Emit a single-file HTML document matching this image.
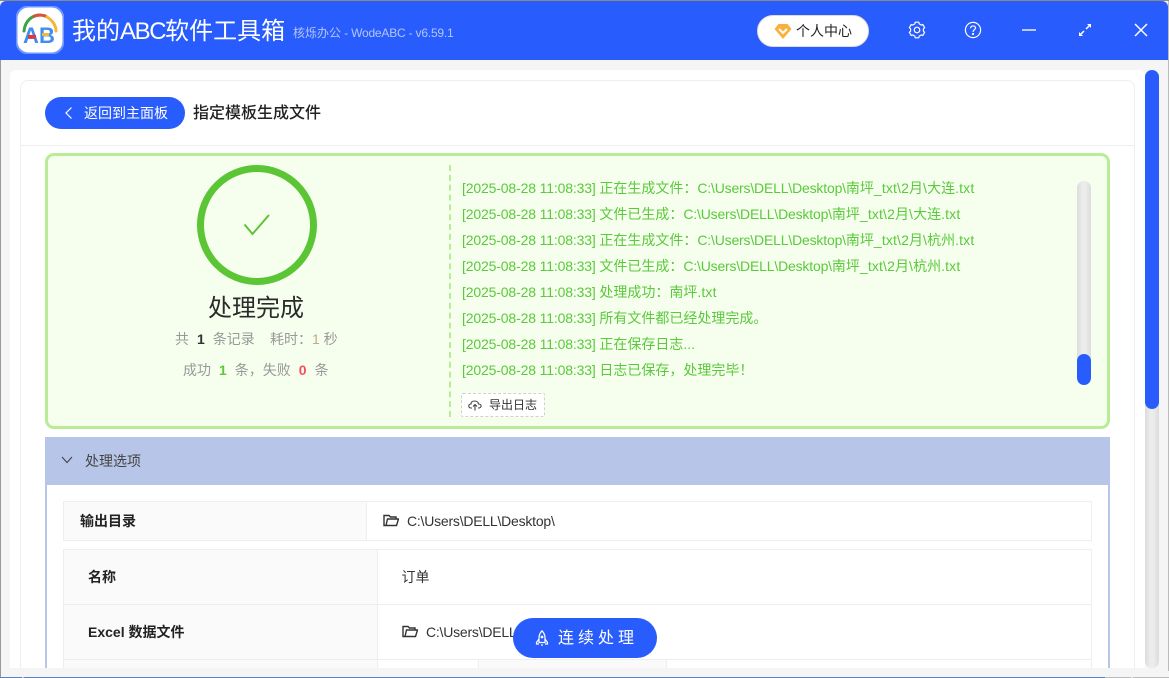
<!DOCTYPE html>
<html lang="zh"><head><meta charset="utf-8"><title>我的ABC软件工具箱</title>
<style>
*{box-sizing:border-box;margin:0;padding:0}
html,body{width:1169px;height:678px;overflow:hidden;background:#fff;font-family:"Liberation Sans","Noto Sans CJK SC",sans-serif}
.a{position:absolute;white-space:nowrap}
#win{position:absolute;left:0;top:0;width:1169px;height:678px;overflow:hidden;background:#f5f5f5}
.log{position:absolute;left:462px;font-size:14px;line-height:20px;color:#5ac93c;white-space:nowrap;letter-spacing:-.15px}
.log i{font-style:normal;letter-spacing:0}
.log span{letter-spacing:-.18px}
.log span.q{letter-spacing:.15px}
.lbl{font-weight:bold;font-size:14px;color:#222;line-height:20px}
.val{font-size:14px;color:#333;line-height:20px;letter-spacing:-.22px}
.cell{position:absolute;border:1px solid #eee}
.st{font-size:14px;line-height:20px;color:#999}
.st b{margin:0 8px}
.tr{background:linear-gradient(90deg,#dcdcdc,#ececec 40%,#ececec 60%,#dcdcdc)}
</style></head><body>
<div id="win">
<div class="a" style="left:0;top:0;width:1169px;height:1px;background:#8a8a8a"></div>
<div class="a" style="left:0;top:1px;width:1168px;height:59px;background:#285cfc;border-radius:6px 6px 0 0"></div>
<div class="a" style="left:0;top:60px;width:1px;height:618px;background:#9a9a9a"></div>
<div class="a" style="left:1168px;top:1px;width:1px;height:670px;background:#bbb"></div>
<div class="a" style="left:0;top:677px;width:1105px;height:1px;background:#5b7fc0"></div>
<div class="a" style="left:1105px;top:677px;width:64px;height:1px;background:#bbb"></div>

<svg class="a" style="left:16px;top:6px" width="48" height="48" viewBox="0 0 48 48">
<rect x="0.5" y="0.5" width="47" height="47" rx="12" fill="#fff" stroke="#6f97ff" stroke-width="2"/>
<path d="M8 25 C9 15 16 9 24 9" fill="none" stroke="#3aa34a" stroke-width="3" stroke-linecap="round"/>
<path d="M17 11 C21 8.500 27 8.500 31 11" fill="none" stroke="#d8533b" stroke-width="3"/>
<path d="M31 11 C36 14 40 19 40 25" fill="none" stroke="#f4b63c" stroke-width="3" stroke-linecap="round"/>
<text x="7" y="37" font-family="Liberation Sans" font-weight="bold" font-size="22" fill="#3f8df0">A</text>
<text x="23" y="37" font-family="Liberation Sans" font-weight="bold" font-size="22" fill="#3f8df0">B</text>
<rect x="12" y="29" width="8" height="3.500" fill="#ee3333"/>
<rect x="26" y="27" width="7" height="3" fill="#f4b63c"/>
</svg>

<div class="a" style="left:72px;top:15px;font-size:24px;line-height:34px;color:#fff">我的<span style="letter-spacing:-1.400px">ABC</span>软件工具箱</div>
<div class="a" style="left:293px;top:24px;font-size:12px;line-height:18px;color:#b4c6fb">核烁办公<span style="letter-spacing:-.2px"> - WodeABC - v6.59.1</span></div>

<div class="a" style="left:757px;top:15px;width:112px;height:32px;border-radius:16px;background:#fff;border:1px solid #ddd"></div>
<svg class="a" style="left:774px;top:23px" width="18" height="17" viewBox="0 0 18 17"><path d="M4.500 1H13.500L17.500 6L9 16L0.500 6Z" fill="#fbb03b"/><path d="M5 6L9 10L13 6" fill="none" stroke="#fff" stroke-width="2"/></svg>
<div class="a" style="left:796px;top:21px;font-size:14px;line-height:20px;color:#222">个人中心</div>

<svg class="a" style="left:908px;top:21px" width="18" height="18" viewBox="0 0 18 18" fill="none" stroke="#fff" stroke-width="1.200" stroke-linejoin="round"><path d="M7.200 1.210H10.800L11.220 2.890L13.180 4.020L14.850 3.540L16.650 6.660L15.400 7.870V10.130L16.650 11.340L14.850 14.460L13.180 13.980L11.220 15.110L10.800 16.790H7.200L6.780 15.110L4.820 13.980L3.150 14.460L1.350 11.340L2.600 10.130V7.870L1.350 6.660L3.150 3.540L4.820 4.020L6.780 2.890Z"/><circle cx="9" cy="9" r="2.800"/></svg>
<svg class="a" style="left:964px;top:21px" width="18" height="18" viewBox="0 0 18 18" fill="none" stroke="#fff" stroke-width="1.200"><circle cx="9" cy="9" r="7.600"/><path d="M6.600 7.200C6.600 4.200 11.500 4.200 11.500 7C11.500 8.800 9 8.800 9 11"/><circle cx="9" cy="13" r="0.500" fill="#fff"/></svg>
<div class="a" style="left:1022px;top:29px;width:14px;height:2px;background:#b9cbfd"></div>
<svg class="a" style="left:1078px;top:23px" width="14" height="14" viewBox="0 0 14 14"><path d="M8 6L11 3" stroke="#fff" stroke-width="1.500"/><path d="M9 1H13V5Z" fill="#fff"/><path d="M6 8L3 11" stroke="#fff" stroke-width="1.500"/><path d="M1 9V13H5Z" fill="#fff"/></svg>
<svg class="a" style="left:1134px;top:23px" width="14" height="14" viewBox="0 0 14 14"><path d="M1 1L13 13M13 1L1 13" stroke="#fff" stroke-width="1.500"/></svg>

<div class="a" style="left:10px;top:70px;width:1135px;height:598px;background:#fff;border-radius:6px 6px 0 0"></div>
<div class="a" style="left:20px;top:80px;width:1115px;height:600px;border:1px solid #eee;border-radius:8px"></div>
<div class="a" style="left:21px;top:145px;width:1114px;height:1px;background:#eee"></div>

<div class="a tr" style="left:1145px;top:70px;width:14px;height:598px;border-radius:7px"></div>
<div class="a" style="left:1145px;top:70px;width:14px;height:339px;background:#285cfc;border-radius:7px"></div>

<div class="a" style="left:45px;top:97px;width:140px;height:32px;border-radius:16px;background:#285cfc"></div>
<svg class="a" style="left:63px;top:106px" width="12" height="14" viewBox="0 0 12 14"><path d="M8.500 1.500L3 7L8.500 12.500" fill="none" stroke="#fff" stroke-width="1.200"/></svg>
<div class="a" style="left:84px;top:103px;font-size:14px;line-height:20px;color:#fff">返回到主面板</div>
<div class="a" style="left:193px;top:103px;font-size:16px;line-height:22px;color:#222;font-weight:500">指定模板生成文件</div>

<div class="a" style="left:45px;top:153px;width:1065px;height:276px;background:#f6ffed;border:3.500px solid #b9ec96;border-radius:9px"></div>
<div class="a" style="left:197px;top:165px;width:120px;height:120px;border-radius:50%;border:7px solid #5cc536"></div>
<svg class="a" style="left:243px;top:213px" width="28" height="24" viewBox="0 0 28 24"><path d="M1.500 11.500L9.500 21L26 2" fill="none" stroke="#5cc536" stroke-width="2"/></svg>
<div class="a" style="left:156px;width:200px;text-align:center;top:292px;font-size:24px;line-height:33px;color:#2a2a2a">处理完成</div>
<div class="a st" style="left:175px;top:329px">共<b style="color:#333">1</b>条记录</div>
<div class="a st" style="left:270px;top:329px">耗时：<span style="color:#c0aa80">1</span> 秒</div>
<div class="a st" style="left:183px;top:360px">成功<b style="color:#5ac93c">1</b>条，失败<b style="color:#f5505a">0</b>条</div>

<div class="a" style="left:449px;top:165px;height:252px;border-left:2px dashed #b9ec96"></div>

<div class="log" style="top:178px">[2025-08-28 11:08:33] <i>正在生成文件：</i><span>C:\Users\DELL\Desktop\</span><i>南坪</i><span class="q">_txt\2</span><i>月</i><span class="q">\</span><i>大连</i><span class="q">.txt</span></div>
<div class="log" style="top:204px">[2025-08-28 11:08:33] <i>文件已生成：</i><span>C:\Users\DELL\Desktop\</span><i>南坪</i><span class="q">_txt\2</span><i>月</i><span class="q">\</span><i>大连</i><span class="q">.txt</span></div>
<div class="log" style="top:230px">[2025-08-28 11:08:33] <i>正在生成文件：</i><span>C:\Users\DELL\Desktop\</span><i>南坪</i><span class="q">_txt\2</span><i>月</i><span class="q">\</span><i>杭州</i><span class="q">.txt</span></div>
<div class="log" style="top:256px">[2025-08-28 11:08:33] <i>文件已生成：</i><span>C:\Users\DELL\Desktop\</span><i>南坪</i><span class="q">_txt\2</span><i>月</i><span class="q">\</span><i>杭州</i><span class="q">.txt</span></div>
<div class="log" style="top:282px">[2025-08-28 11:08:33] <i>处理成功：南坪</i><span class="q">.txt</span></div>
<div class="log" style="top:308px">[2025-08-28 11:08:33] <i>所有文件都已经处理完成。</i></div>
<div class="log" style="top:334px">[2025-08-28 11:08:33] <i>正在保存日志...</i></div>
<div class="log" style="top:360px">[2025-08-28 11:08:33] <i>日志已保存，处理完毕！</i></div>

<div class="a" style="left:461px;top:393px;width:84px;height:24px;border:1px dashed #d0d0d0;border-radius:2px;background:#fff"></div>
<svg class="a" style="left:468px;top:398px" width="14" height="14" viewBox="0 0 14 14" fill="none" stroke="#444" stroke-width="1.100"><path d="M4 10H3C0 10 0 6 3 6C3 2 10 2 10.500 6C14 6 14 10 10.500 10H10"/><path d="M7 12.500V7M5 8.500L7 6.500L9 8.500"/></svg>
<div class="a" style="left:489px;top:396px;font-size:12px;line-height:18px;color:#333">导出日志</div>

<div class="a tr" style="left:1077px;top:181px;width:14px;height:204px;border-radius:7px"></div>
<div class="a" style="left:1077px;top:354px;width:14px;height:31px;background:#285cfc;border-radius:7px"></div>

<div class="a" style="left:45px;top:437px;width:1065px;height:48px;background:#b7c6e8"></div>
<div class="a" style="left:45px;top:485px;width:2px;height:183px;background:#b7c6e8"></div>
<div class="a" style="left:1108px;top:485px;width:2px;height:183px;background:#b7c6e8"></div>
<svg class="a" style="left:61px;top:455px" width="12" height="10" viewBox="0 0 12 10"><path d="M1 2L6 7.500L11 2" fill="none" stroke="#444" stroke-width="1.100"/></svg>
<div class="a" style="left:85px;top:451px;font-size:14px;line-height:20px;color:#444">处理选项</div>

<div class="cell" style="left:63px;top:501px;width:1029px;height:40px"></div>
<div class="a" style="left:64px;top:502px;width:303px;height:38px;background:#fafafa;border-right:1px solid #eee"></div>
<div class="a lbl" style="left:80px;top:511px">输出目录</div>
<svg class="a" style="left:383px;top:514px" width="16" height="13" viewBox="0 0 16 13" fill="none" stroke="#333" stroke-width="1.400"><path d="M3 11.500H1V1.500H6L7.500 3H13V5M3 11.500L4.500 5H15.500L13.500 11.500Z"/></svg>
<div class="a val" style="left:407px;top:511px">C:\Users\DELL\Desktop\</div>

<div class="cell" style="left:63px;top:549px;width:1029px;height:125px"></div>
<div class="a" style="left:64px;top:550px;width:314px;height:118px;background:#fafafa;border-right:1px solid #eee"></div>
<div class="a" style="left:64px;top:604px;width:1027px;height:1px;background:#eee"></div>
<div class="a" style="left:64px;top:659px;width:1027px;height:1px;background:#eee"></div>
<div class="a lbl" style="left:88px;top:567px">名称</div>
<div class="a val" style="left:401.500px;top:567px;letter-spacing:0">订单</div>
<div class="a lbl" style="left:88px;top:622px">Excel 数据文件</div>
<svg class="a" style="left:402px;top:625px" width="16" height="13" viewBox="0 0 16 13" fill="none" stroke="#333" stroke-width="1.400"><path d="M3 11.500H1V1.500H6L7.500 3H13V5M3 11.500L4.500 5H15.500L13.500 11.500Z"/></svg>
<div class="a val" style="left:426px;top:622px">C:\Users\DELL\Desktop\</div>
<div class="a" style="left:378px;top:660px;width:100px;height:8px;background:#fff"></div>
<div class="a" style="left:478px;top:660px;width:189px;height:8px;background:#fafafa;border-left:1px solid #eee;border-right:1px solid #eee"></div>

<div class="a" style="left:1px;top:668px;width:1144px;height:9px;background:#f5f5f5"></div>

<div class="a" style="left:513px;top:618px;width:144px;height:40px;border-radius:20px;background:#285cfc"></div>
<svg class="a" style="left:535px;top:630px" width="14" height="17" viewBox="0 0 14 17" fill="none" stroke="#fff" stroke-width="1.200"><path d="M7 .8C4.800 3 4 5.500 4 8V12.500H10V8C10 5.500 9.200 3 7 .8Z"/><circle cx="7" cy="7" r=".8" fill="#fff"/><path d="M4 9L1.500 12.500V14H4M10 9L12.500 12.500V14H10M7 14V16"/></svg>
<div class="a" style="left:558px;top:628px;font-size:16px;line-height:22px;color:#fff;letter-spacing:4px">连续处理</div>
</div>
</body></html>
